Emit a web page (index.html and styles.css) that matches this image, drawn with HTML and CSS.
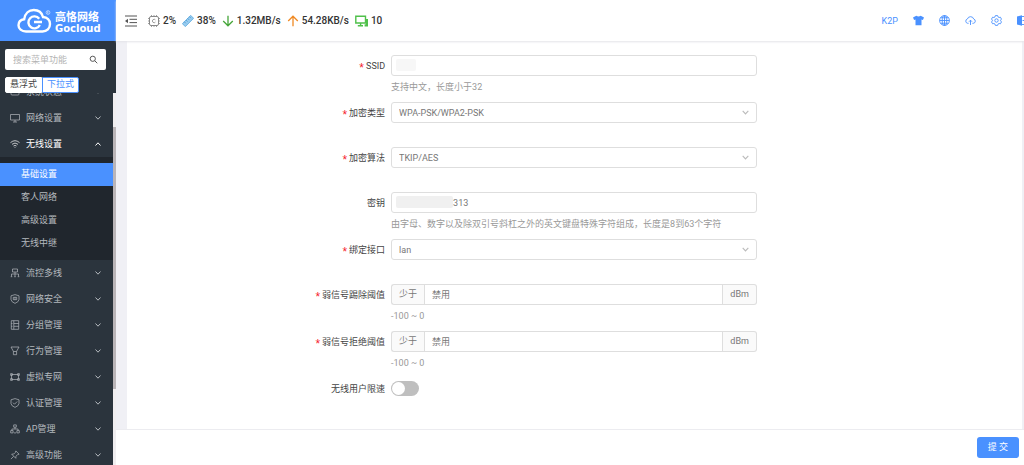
FILE: index.html
```html
<!DOCTYPE html>
<html lang="zh-CN">
<head>
<meta charset="utf-8">
<title>高恪网络 - 无线设置</title>
<link rel="stylesheet" href="styles.css">
</head>
<body>
<svg class="defs" aria-hidden="true">
  <symbol id="chev" viewBox="0 0 8 8"><path d="M1.5 2.5 4 5.2 6.500 2.500"/></symbol>
</svg>
<div class="app">
  <aside class="sidebar">
    <a class="brand" href="#">
      <svg class="brand-mark" viewBox="0 0 36 26" aria-hidden="true">
        <path d="M9 23.500C4.500 23.500 1.500 20.700 1.500 17.200c0-3.300 2.300-5.600 5.700-6C8 5.300 12 2 16.800 2c4.700 0 8.100 2.700 9.200 7 4.200.3 7 3.200 7 7 0 4.300-3.100 7.500-7.500 7.500z" fill="none" stroke="#fff" stroke-width="2.400"/>
        <path d="M22.200 10.800a6 6 0 1 0 .6 6.200M17 14h8" fill="none" stroke="#fff" stroke-width="2.400"/>
        <circle cx="31" cy="4.500" r="1.900" fill="none" stroke="#cfe1ff" stroke-width=".7"/>
        <path d="M30.400 5.600V3.500h.8q.7.6 0 1.100h-.6l.8 1" fill="none" stroke="#cfe1ff" stroke-width=".5"/>
      </svg>
      <span class="brand-name"><span class="brand-cn">高恪网络</span><span class="brand-en">Gocloud</span></span>
    </a>
    <div class="tools">
      <label class="search">
        <input type="text" placeholder="搜索菜单功能" aria-label="搜索菜单功能">
        <svg viewBox="0 0 10 10" aria-hidden="true"><circle cx="4.200" cy="4.200" r="2.900"/><path d="m6.300 6.300 2.900 2.900"/></svg>
      </label>
      <div class="modes">
        <label class="mode"><input type="radio" name="mode"><span>悬浮式</span></label>
        <label class="mode"><input type="radio" name="mode" checked><span>下拉式</span></label>
      </div>
    </div>
    <div class="menu-scroll">
      <nav class="menu">
        <a class="item" href="#"><svg class="ico" viewBox="0 0 10 10"><rect x="1" y="1.500" width="8" height="6.500" rx="1"/><path d="M1 4h8"/></svg><span>系统状态</span><svg class="chev"><use href="#chev"/></svg></a>
        <a class="item" href="#"><svg class="ico" viewBox="0 0 10 10"><path d="M.5 1.500h9v5.500h-9zM5 7v2M3 9h4"/></svg><span>网络设置</span><svg class="chev"><use href="#chev"/></svg></a>
        <a class="item open" href="#"><svg class="ico" viewBox="0 0 10 10"><path d="M.5 3.600Q5-.2 9.500 3.600M2 5.300q3-2.500 6 0M3.500 7q1.500-1.300 3 0M4.600 8.400h.8"/></svg><span>无线设置</span><svg class="chev"><use href="#chev"/></svg></a>
        <div class="submenu">
          <a class="sub active" href="#">基础设置</a>
          <a class="sub" href="#">客人网络</a>
          <a class="sub" href="#">高级设置</a>
          <a class="sub" href="#">无线中继</a>
        </div>
        <a class="item" href="#"><svg class="ico" viewBox="0 0 10 10"><path d="M2.500 1h5v3h-5zM5 4v2M1.500 8.500V6h7v2.500M5 6v2.500M.7 8.700h1.600M4.200 8.700h1.600M7.700 8.700h1.600"/></svg><span>流控多线</span><svg class="chev"><use href="#chev"/></svg></a>
        <a class="item" href="#"><svg class="ico" viewBox="0 0 10 10"><path d="M5 .6 9 1.800v3.700Q8.700 8 5 9.400 1.300 8 1 5.500V1.800zM3.300 3.300h3.400v2.400H3.300zM5 3.300v2.400"/></svg><span>网络安全</span><svg class="chev"><use href="#chev"/></svg></a>
        <a class="item" href="#"><svg class="ico" viewBox="0 0 10 10"><path d="M1.300.7h7.400v8.600H1.300zM3.800.7v8.600M3.800 3.500h4.900M3.800 6.300h4.900M1.300 3.500h1.200M1.300 6.300h1.200"/></svg><span>分组管理</span><svg class="chev"><use href="#chev"/></svg></a>
        <a class="item" href="#"><svg class="ico" viewBox="0 0 10 10"><path d="M1 1h8L6.600 5.300v3.400H3.400V5.300zM3.400 5.500h3.200"/></svg><span>行为管理</span><svg class="chev"><use href="#chev"/></svg></a>
        <a class="item" href="#"><svg class="ico" viewBox="0 0 10 10"><path d="M1.500 2.500h7v5h-7zM.6 1.600h1.800v1.800H.6zM7.600 1.600h1.800v1.800H7.600zM.6 6.600h1.800v1.800H.6zM7.600 6.600h1.800v1.800H7.600z"/></svg><span>虚拟专网</span><svg class="chev"><use href="#chev"/></svg></a>
        <a class="item" href="#"><svg class="ico" viewBox="0 0 10 10"><path d="M5 .6 9 1.800v3.700Q8.700 8 5 9.400 1.300 8 1 5.500V1.800zM3 4.700l1.500 1.500L7.200 3.500"/></svg><span>认证管理</span><svg class="chev"><use href="#chev"/></svg></a>
        <a class="item" href="#"><svg class="ico" viewBox="0 0 10 10"><path d="M3.700.9h2.600v2.300H3.700zM5 3.200V5M1.900 6.600V5h6.200v1.600M.7 6.600h2.400v2.300H.7zM6.900 6.600h2.400v2.300H6.900zM3.900 8.900h2.200"/></svg><span>AP管理</span><svg class="chev"><use href="#chev"/></svg></a>
        <a class="item" href="#"><svg class="ico" viewBox="0 0 10 10"><path d="M5.800.9 9.100 4.200 7.600 4.600 6 6.200 5.800 8.300 1.700 4.200l2.100-.2 1.600-1.600zM3.600 6.400.9 9.100"/></svg><span>高级功能</span><svg class="chev"><use href="#chev"/></svg></a>
      </nav>
      <div class="track"><div class="thumb"></div></div>
    </div>
  </aside>

  <div class="page">
    <header class="topbar">
      <button class="fold" type="button" aria-label="收起菜单"><svg viewBox="0 0 12 12"><path d="M0 1h12M4.500 4.300H12M4.500 7.600H12M0 11h12"/><path class="tri" d="M0 6l3-2.200v4.400z"/></svg></button>
      <ul class="stats">
        <li><svg viewBox="0 0 12 12"><rect x="1.500" y="1.500" width="9" height="9" rx="1.500" fill="none" stroke="#888"/><path d="M3.500 0v1.500M6 0v1.500M8.500 0v1.500M3.500 10.500V12M6 10.500V12M8.500 10.500V12M0 3.500h1.500M0 6h1.500M0 8.500h1.500M10.500 3.500H12M10.500 6H12M10.500 8.500H12" stroke="#888" stroke-width=".8"/><path d="M7.400 4.900a1.700 1.700 0 1 0 0 2.200" fill="none" stroke="#888" stroke-width=".8"/></svg>2%</li>
        <li><svg viewBox="0 0 12 12"><path d="M.4 8.700 8.700.4l2.900 2.900-8.300 8.300z" fill="#9bcdf0" stroke="#4fa3dc" stroke-width=".8"/><path d="m2.300 6.800 1.500 1.500M4 5.100l1.500 1.500M5.700 3.400l1.500 1.500M7.400 1.700l1.500 1.500" stroke="#3d94d0" stroke-width=".8"/></svg>38%</li>
        <li><svg viewBox="0 0 12 12"><path d="M6 .8v10M1.200 6 6 10.800 10.800 6" fill="none" stroke="#46a63a" stroke-width="1.300"/></svg>1.32MB/s</li>
        <li><svg viewBox="0 0 12 12"><path d="M6 11.200v-10M1.200 6 6 1.200 10.800 6" fill="none" stroke="#f08a24" stroke-width="1.300"/></svg>54.28KB/s</li>
        <li><svg class="wide" viewBox="0 0 13 12"><path d="M.8 1.200h9.700v6.800H.8zM5.600 8v2.500M2.800 10.700H8" fill="none" stroke="#4fc04a" stroke-width="1.400"/><path d="M11 4h2v7.400H9.600V9.300H11z" fill="#4fc04a"/></svg>10</li>
      </ul>
      <div class="actions">
        <a href="#">K2P</a>
        <button type="button" aria-label="主题"><svg viewBox="0 0 11 11"><path d="M3.300.8Q5.500 2.400 7.700.8L11 2.500 9.900 5l-1.400-.5v5.700h-6V4.500L1.100 5 0 2.500z" fill="currentColor" stroke="none"/></svg></button>
        <button type="button" aria-label="语言"><svg viewBox="0 0 11 11"><circle cx="5.500" cy="5.500" r="4.900"/><ellipse cx="5.500" cy="5.500" rx="2.300" ry="4.900"/><path d="M5.500.6v9.800M.6 5.500h9.800M1.500 2.800h8M1.500 8.200h8"/></svg></button>
        <button type="button" aria-label="上传"><svg viewBox="0 0 11 11"><path d="M3.600 8.300H2.700a2.200 2.200 0 0 1-.3-4.300 3.300 3.300 0 0 1 6.300 0 2.200 2.200 0 0 1-.4 4.300h-.9M5.500 10V5.300M4 6.700l1.500-1.500L7 6.700"/></svg></button>
        <button type="button" aria-label="设置"><svg viewBox="0 0 11 11"><path d="m4.400.6h2.200l.4 1.300 1.100.6 1.300-.3 1.100 1.900-.9 1v.8l.9 1-1.100 1.900-1.300-.3-1.100.6-.4 1.300H4.400L4 9.100l-1.100-.6-1.300.3L.5 6.900l.9-1v-.8l-.9-1 1.100-1.900 1.300.3L4 1.900z"/><circle cx="5.500" cy="5.500" r="1.700"/></svg></button>
        <button type="button" aria-label="退出"><svg viewBox="0 0 11 11"><path d="M0 1.500 5 .3v10.400L0 9.500z" fill="currentColor" stroke="none"/><path d="M5 1.500h5V4M5 9.500h5V7M5.500 5.500H10"/></svg></button>
      </div>
    </header>

    <main class="content">
      <form class="panel" id="wifi">
        <div class="row">
          <label class="req" for="ssid">SSID</label>
          <div class="field"><div class="masked"><input id="ssid" type="text"><span class="mask short"></span></div><p class="hint">支持中文，长度小于32</p></div>
        </div>
        <div class="row">
          <label class="req" for="enc">加密类型</label>
          <div class="field"><div class="select"><select id="enc"><option>WPA-PSK/WPA2-PSK</option></select><svg><use href="#chev"/></svg></div></div>
        </div>
        <div class="row">
          <label class="req" for="alg">加密算法</label>
          <div class="field"><div class="select"><select id="alg"><option>TKIP/AES</option></select><svg><use href="#chev"/></svg></div></div>
        </div>
        <div class="row">
          <label for="key">密钥</label>
          <div class="field"><div class="masked long"><input id="key" type="text" value="313"><span class="mask"></span></div><p class="hint">由字母、数字以及除双引号斜杠之外的英文键盘特殊字符组成，长度是8到63个字符</p></div>
        </div>
        <div class="row">
          <label class="req" for="lan">绑定接口</label>
          <div class="field"><div class="select"><select id="lan"><option>lan</option></select><svg><use href="#chev"/></svg></div></div>
        </div>
        <div class="row">
          <label class="req" for="kick">弱信号踢除阈值</label>
          <div class="field"><div class="group"><span>少于</span><input id="kick" type="text" value="禁用"><span>dBm</span></div><p class="hint">-100 ~ 0</p></div>
        </div>
        <div class="row">
          <label class="req" for="deny">弱信号拒绝阈值</label>
          <div class="field"><div class="group"><span>少于</span><input id="deny" type="text" value="禁用"><span>dBm</span></div><p class="hint">-100 ~ 0</p></div>
        </div>
        <div class="row">
          <label for="limit">无线用户限速</label>
          <div class="field toggle"><input class="switch" id="limit" type="checkbox" role="switch"></div>
        </div>
      </form>
    </main>

    <footer class="bottom"><button class="submit" type="submit" form="wifi">提 交</button></footer>
  </div>
</div>
</body>
</html>
```

FILE: styles.css
```css
* { box-sizing: border-box; }

body {
  margin: 0;
  font: 9px/14px Roboto, "Noto Sans CJK SC", sans-serif;
  color: #444;
  background: #f0f0f5;
}

a { color: inherit; text-decoration: none; }
button, input, select { font: inherit; color: inherit; margin: 0; }
button { border: 0; padding: 0; background: none; cursor: pointer; }
input:focus, select:focus { outline: 1px solid #4a90ff; }
.defs { display: none; }

.app {
  display: grid;
  grid-template-columns: 116px minmax(0, 1fr);
  height: 100vh;
  overflow: hidden;
}

/* Sidebar */
.sidebar {
  display: flex;
  flex-direction: column;
  min-height: 0;
  background: #2b343d;
}

.brand {
  display: flex;
  flex: none;
  align-items: center;
  gap: 2px;
  height: 41px;
  padding-left: 17px;
  color: #fff;
  background: #4a91ff;
}
.brand-mark { width: 36px; height: 26px; }
.brand-name { display: flex; flex-direction: column; padding-top: 2px; font-weight: 700; }
.brand-cn { font-size: 11px; line-height: 13px; }
.brand-en { font: 700 10px/9px "DejaVu Sans", sans-serif; }

.tools {
  display: flex;
  flex: none;
  flex-direction: column;
  gap: 7px;
  padding: 8px 10px 0 5px;
}
.search {
  display: flex;
  align-items: center;
  height: 21px;
  padding: 0 8px;
  border-radius: 2px;
  background: #fff;
}
.search input { flex: 1; min-width: 0; padding: 0; border: 0; background: none; outline: 0; }
.search input::placeholder { color: #b4b4b4; opacity: 1; }
.search svg { width: 9px; height: 9px; fill: none; stroke: #555; stroke-width: 1.1; }

.modes { display: flex; height: 16px; }
.mode { display: flex; color: #444; }
.mode input { position: absolute; opacity: 0; }
.mode span {
  padding: 0 4px;
  border: 1px solid #fff;
  border-radius: 2px 0 0 2px;
  line-height: 13px;
  background: #fff;
}
.mode + .mode span { border-radius: 0 2px 2px 0; }
.mode input:checked + span { color: #4a91ff; border-color: #4a91ff; }

.menu-scroll {
  display: grid;
  grid-template-columns: minmax(0, 1fr) 3px;
  flex: 1;
  min-height: 0;
  overflow: hidden;
}
.menu { margin-top: -14px; color: #b4b9be; }
.item {
  display: flex;
  align-items: center;
  gap: 6px;
  height: 26px;
  padding: 0 11px 0 10px;
}
.item span { flex: 1; }
.item.open { color: #fff; }
.ico { width: 10px; height: 10px; fill: none; stroke: currentColor; stroke-width: .7; }
.chev { width: 8px; height: 8px; fill: none; stroke: currentColor; stroke-width: 1; }
.open .chev { transform: rotate(180deg); }
.submenu { padding: 6px 0 5px; background: #20262d; }
.sub { display: block; padding-left: 21px; line-height: 23px; }
.sub.active { color: #fff; background: #4a91ff; }

.track { display: flex; flex-direction: column; background: #f0eef0; }
.track::before { content: ""; flex: 34; }
.track::after { content: ""; flex: 79; }
.thumb { flex: 260; background: #bab5b8; }

/* Top bar */
.page { display: flex; flex-direction: column; min-width: 0; min-height: 0; }
.topbar {
  display: flex;
  z-index: 1;
  flex: none;
  align-items: center;
  gap: 11px;
  height: 41px;
  padding-left: 9px;
  overflow: hidden;
  background: #fff;
  box-shadow: 0 1px 2px #e4e4e8;
}
.fold, .fold svg { display: block; width: 12px; height: 12px; }
.fold svg { fill: none; stroke: #555; }
.fold .tri { fill: #555; stroke: none; }
.stats {
  display: flex;
  gap: 6px;
  margin: 0;
  padding: 0;
  list-style: none;
  font-size: 10px;
  font-weight: 500;
  color: #333;
}
.stats li { display: flex; align-items: center; gap: 3px; }
.stats svg { width: 12px; height: 12px; }
.stats .wide { width: 13px; }
.actions {
  display: flex;
  align-items: center;
  gap: 15px;
  margin-left: auto;
  margin-right: -4px;
  color: #4a91ff;
}
.actions svg { display: block; width: 11px; height: 11px; fill: none; stroke: currentColor; stroke-width: .9; }

/* Form */
.content { flex: 1; min-height: 0; padding: 0 2px 0 11px; overflow: hidden; }
.panel { min-height: 100%; padding: 14px 9px 0 8px; background: #fff; }
.row {
  display: grid;
  grid-template-columns: 7fr 10fr 7fr;
  margin-bottom: 23px;
}
.row:has(.hint) { margin-bottom: 4px; }
.row > label { padding-right: 6px; line-height: 22px; text-align: right; }
.req::before {
  content: "*";
  margin-right: 2px;
  color: #f5222d;
  font-family: "Liberation Sans", sans-serif;
  font-size: 12px;
  line-height: 9px;
  vertical-align: -3px;
}
.field { min-width: 0; color: #777; }
.field input:not(.switch), .field select {
  display: block;
  width: 100%;
  height: 21px;
  padding: 0 7px;
  border: 1px solid #dedede;
  border-radius: 3px;
  background: #fff;
}
.field select { appearance: none; }
.hint { margin: 0; line-height: 22px; color: #999; }

.masked, .select { position: relative; }
.field .long input:not(.switch) { padding-left: 61px; }
.mask {
  position: absolute;
  top: 4px;
  left: 5px;
  width: 57px;
  height: 12px;
  border-radius: 2px;
  background: #f0f0f0;
}
.mask.short { width: 20px; background: #f7f7f7; }
.select svg {
  position: absolute;
  top: 6px;
  right: 7px;
  width: 9px;
  height: 9px;
  fill: none;
  stroke: #bbb;
  pointer-events: none;
}

.group { display: flex; }
.group span {
  flex: none;
  padding: 0 7px;
  border: 1px solid #dedede;
  border-radius: 3px;
  line-height: 19px;
  background: #fafafa;
}
.group span:first-child { border-right: 0; border-radius: 3px 0 0 3px; }
.group span:last-child { border-left: 0; border-radius: 0 3px 3px 0; }
.group input:not(.switch) { flex: 1; min-width: 0; border-radius: 0; }

.toggle { display: flex; align-items: center; height: 21px; }
.switch {
  display: flex;
  appearance: none;
  width: 28px;
  height: 15px;
  padding: 1px;
  border-radius: 8px;
  background: #bfbfbf;
}
.switch::before { content: ""; width: 13px; height: 13px; border-radius: 50%; background: #fff; }
.switch:checked { justify-content: flex-end; background: #4a91ff; }

/* Submit bar */
.bottom {
  display: flex;
  flex: none;
  justify-content: flex-end;
  padding: 7px 5px 7px;
  border-top: 1px solid #ececf0;
  background: #fff;
}
.submit {
  padding: 0 11px;
  border-radius: 3px;
  line-height: 21px;
  color: #fff;
  background: #4a91ff;
}
```
